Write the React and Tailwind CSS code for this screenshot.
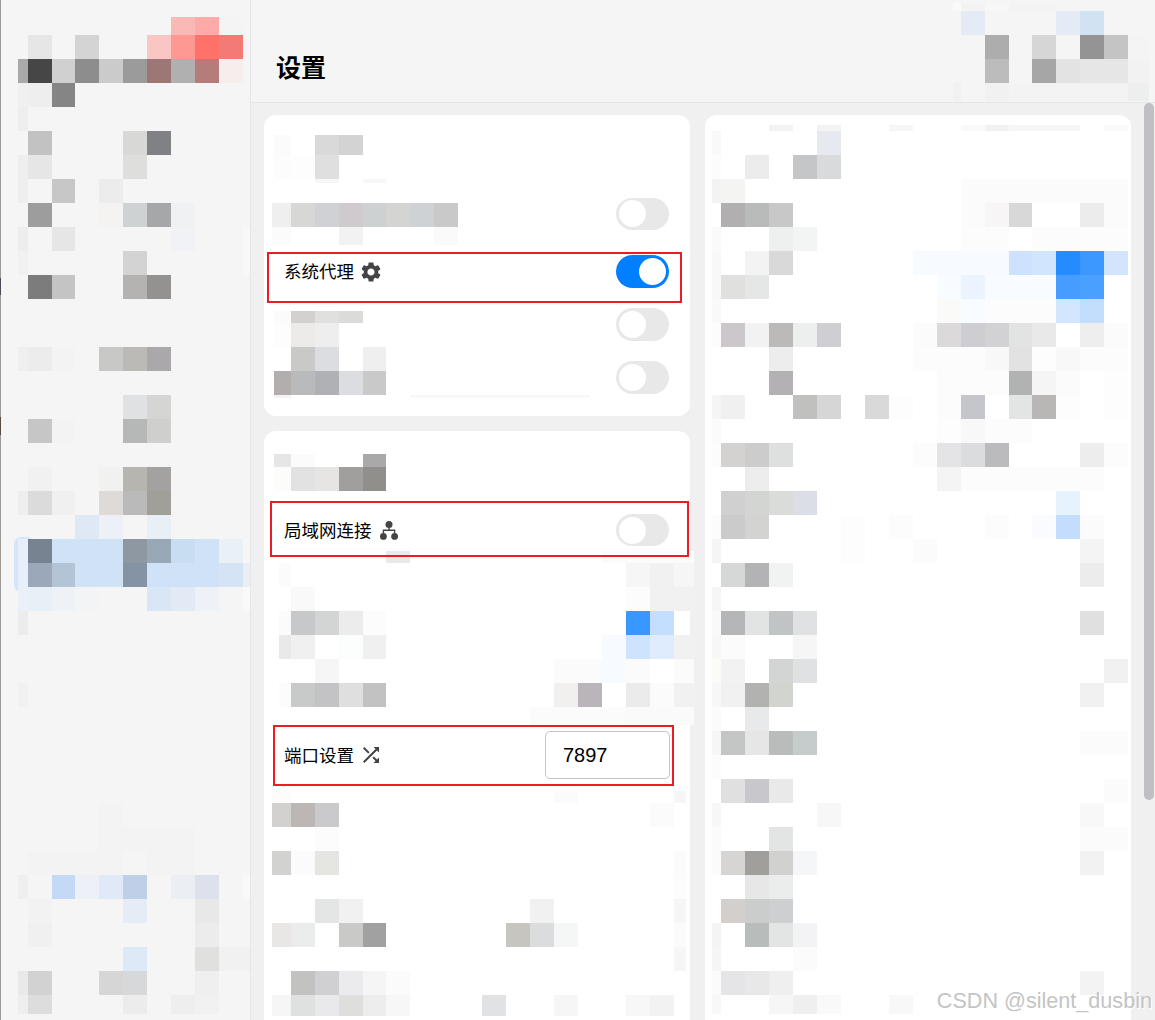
import React from 'react'
import { MdSettings, MdShuffle } from 'react-icons/md'

// Pixelated regions of the screenshot: [row, col, colour, col, colour, ...]
const SIDE_XS = [18, 28, 52, 75, 99, 123, 147, 171, 195, 219, 243, 250]
const SIDE_ROWS = [
    [-1, 7, '#fbb9b6', 8, '#fdaaa8', 9, '#f4f4f4'],
    [0, 1, '#e6e6e6', 3, '#d4d4d4', 6, '#f9c6c4', 7, '#fe9893', 8, '#ff7269', 9, '#f37a75'],
    [1, 0, '#a9a9a9', 1, '#464646', 2, '#d0d0d0', 3, '#8d8d8d', 4, '#cbcbcb', 5, '#9b9b9b', 6, '#9d7775', 7, '#b0b0b0', 8, '#b57c79', 9, '#f6eeec'],
    [2, 0, '#f0f0f0', 1, '#eeeeee', 2, '#858585'],
    [3, 0, '#eeeeee'],
    [4, 1, '#c2c2c2', 5, '#d8d8d6', 6, '#808184'],
    [5, 0, '#eeeeee', 1, '#e6e6e6', 5, '#dededc'],
    [6, 0, '#eeeeee', 2, '#c7c7c7', 4, '#ececec'],
    [7, 1, '#9d9d9d', 4, '#f4f3f1', 5, '#cfd2d3', 6, '#a6a7a8', 7, '#f0f1f3'],
    [8, 0, '#ededed', 2, '#e6e6e6', 7, '#f1f2f5', 10, '#f8f8f8'],
    [9, 0, '#f1f1f1', 5, '#d3d3d3', 10, '#f8f8f8'],
    [10, 1, '#7c7c7c', 2, '#c4c4c4', 5, '#b4b3b1', 6, '#939290'],
    [13, 0, '#efefef', 1, '#ececec', 2, '#f3f3f3', 4, '#c8c8c6', 5, '#bbbab7', 6, '#aaa8aa'],
    [15, 5, '#e0e1e2', 6, '#d5d5d3'],
    [16, 1, '#c6c6c6', 2, '#f3f3f3', 5, '#b6b8b7', 6, '#cfcfcd'],
    [18, 1, '#f1f1f1', 4, '#f1f1ef', 5, '#b7b5b0', 6, '#a3a2a0'],
    [19, 0, '#eeeeee', 1, '#dbdbdb', 2, '#f0f0f0', 4, '#dddad7', 5, '#bababa', 6, '#a09f9a'],
    [20, 3, '#dfe9f5', 4, '#edf1f7', 6, '#e8eff7'],
    [21, 0, '#e9effa', 1, '#778390', 2, '#cfe2f6', 3, '#cfe2f6', 4, '#cfe2f6', 5, '#8e98a3', 6, '#99a8b7', 7, '#c8ddf1', 8, '#cfe2f7', 9, '#e9f0f6', 10, '#f6f6f6'],
    [22, 0, '#e9effa', 1, '#9aa8b9', 2, '#b2c4d6', 3, '#cfe2f6', 4, '#cfe2f6', 5, '#8594a5', 6, '#cfe2f7', 7, '#cfe2f7', 8, '#cfe2f7', 9, '#d5e4f4', 10, '#e9eef5'],
    [23, 0, '#e9f0f9', 1, '#e7eff7', 2, '#eef2f7', 3, '#f2f4f6', 6, '#d9e6f6', 7, '#e2ebf5', 8, '#eef2f6', 10, '#f9f9f9'],
    [24, 0, '#ececec'],
    [27, 0, '#f1f1f1'],
    [32, 4, '#f3f3f3'],
    [33, 4, '#f3f3f3', 5, '#f3f3f3', 6, '#f3f3f3', 7, '#f3f3f3'],
    [34, 1, '#f3f3f3', 2, '#f3f3f3', 3, '#f3f3f3', 4, '#f3f3f3', 6, '#f3f3f3', 7, '#f3f3f3'],
    [35, 0, '#efefef', 2, '#c3d9f5', 3, '#edf1f7', 4, '#dfe9f7', 5, '#bfcfe8', 7, '#ebeff4', 8, '#dde1ec', 10, '#f9f9f9'],
    [36, 1, '#f2f2f2', 5, '#e4edf6', 8, '#e8e8e8'],
    [37, 1, '#f0f0f0', 8, '#ececec'],
    [38, 5, '#dde9f7', 8, '#e0e0de', 9, '#f1f1f1', 10, '#f1f1f1'],
    [39, 0, '#e9e9e9', 1, '#d2d2d2', 4, '#d6d6d6', 5, '#d7d8d9', 8, '#efefef'],
    [40, 0, '#eeeeee', 1, '#dddddd', 5, '#ececec', 7, '#eeeeee', 8, '#f1f1f1'],
]

const HEAD_XS = [953, 961, 985, 1009, 1032, 1056, 1080, 1104, 1128, 1149]
const HEAD_ROWS = [
    [-1, 0, '#fafafa', 1, '#f3f3f3', 2, '#f7f7f7', 3, '#f3f3f3', 4, '#f3f3f3'],
    [0, 1, '#e4ebf6', 5, '#e4ebf6', 6, '#d1e2f3'],
    [1, 2, '#adadad', 4, '#d6d6d6', 6, '#949494', 7, '#c4c4c4', 8, '#f4f4f4'],
    [2, 2, '#bcbcbc', 4, '#a6a6a6', 5, '#e3e3e3', 6, '#e6e6e6', 7, '#e6e6e6', 8, '#f2f2f2'],
    [3, 0, '#f1f1f1', 2, '#f1f1f1', 3, '#f3f3f3', 4, '#f3f3f3', 5, '#f3f3f3', 6, '#f3f3f3', 7, '#f3f3f3', 8, '#edefee'],
]

const RIGHT_XS = [712, 721, 745, 769, 793, 817, 841, 865, 889, 913, 937, 961, 985, 1009, 1032, 1056, 1080, 1104, 1128]
const RIGHT_ROWS = [
    [-1, 3, '#f3f3f3', 5, '#f3f3f3', 8, '#f6f6f6', 11, '#f9f9f9', 12, '#f1f1f1', 13, '#f6f6f6', 14, '#f6f6f6', 15, '#f6f6f6', 17, '#fafafa'],
    [0, 0, '#f9f9f9', 5, '#e6e9f0'],
    [1, 0, '#fcfcfc', 2, '#ececec', 4, '#c5c6c7', 5, '#d9dadb'],
    [2, 0, '#f3f3f3', 1, '#f4f4f2', 11, '#fbfbfb', 12, '#fbfbfb', 13, '#fbfbfb', 14, '#fbfbfb', 15, '#fbfbfb', 16, '#fbfbfb', 17, '#fbfbfb'],
    [3, 1, '#b1afaf', 2, '#b9bbba', 3, '#c8c8c8', 11, '#fbfbfb', 12, '#f7f5f6', 13, '#d8d8d8', 16, '#ececec', 17, '#fbfbfb'],
    [4, 0, '#fafafa', 3, '#eef0ef', 4, '#f3f5f4', 11, '#fcfcfc', 12, '#fcfcfc', 14, '#fcfcfc', 15, '#fcfcfc', 16, '#fcfcfc', 17, '#fcfcfc'],
    [5, 0, '#f8f8f8', 2, '#f3f3f3', 3, '#d9d9d9', 9, '#f7fbff', 10, '#f7fbff', 11, '#f7fbff', 12, '#f7fbff', 13, '#cde2fe', 14, '#d1e6fe', 15, '#248cff', 16, '#3c98fe', 17, '#d2e5fd'],
    [6, 0, '#f8f8f8', 1, '#e0e0de', 2, '#e5e7e6', 10, '#f8fbff', 11, '#ebf4fe', 12, '#f8fbff', 13, '#f8fbff', 14, '#f8fbff', 15, '#469cff', 16, '#4aa0fe'],
    [7, 0, '#f9f9f9', 10, '#fafaf8', 11, '#f8fbff', 12, '#fcfcfc', 13, '#fcfcfc', 14, '#fcfcfc', 15, '#d3e6fe', 16, '#c3defc'],
    [8, 0, '#fcfcfc', 1, '#cbc7ca', 2, '#f2f2f2', 3, '#bcbab8', 4, '#edefee', 5, '#cfced3', 9, '#fbfbfb', 10, '#dbd9da', 11, '#ceced2', 12, '#d2d2d4', 13, '#e2e4e3', 14, '#e9e9e9', 16, '#eeeeee', 17, '#fbfbfb'],
    [9, 3, '#ededed', 9, '#fcfcfc', 10, '#fcfcfc', 11, '#fcfcfc', 12, '#f8f8f8', 13, '#e2e2e2', 14, '#fdfdfd', 15, '#f8f8f8', 16, '#fcfcfc', 17, '#fcfcfc'],
    [10, 3, '#b3b1b4', 10, '#fcfcfc', 11, '#fcfcfc', 12, '#fcfcfc', 13, '#b1b3b2', 14, '#f5f5f5', 15, '#fbfbfb', 17, '#fdfdfd'],
    [11, 0, '#f5f5f5', 1, '#f0f0f0', 4, '#c0c0be', 5, '#d6d6d6', 7, '#d9d9d9', 8, '#fdfdfd', 10, '#fcfcfc', 11, '#c5c6cb', 13, '#e3e5e4', 14, '#b8b7b5', 15, '#fdfdfd', 17, '#fdfdfd'],
    [12, 0, '#fbfbfb', 10, '#fdfdfd', 11, '#f8f8f8', 12, '#fcfcfc', 13, '#fcfcfc'],
    [13, 0, '#fcfcfc', 1, '#d3d2d0', 2, '#cccccc', 3, '#dee0df', 9, '#fcfcfc', 10, '#e4e4e6', 11, '#dbdcde', 12, '#bbbabc', 16, '#ededed', 17, '#fcfcfc'],
    [14, 2, '#ededed', 10, '#f4f4f4', 11, '#fcfcfc', 12, '#fcfcfc', 13, '#fcfcfc', 14, '#fcfcfc', 15, '#fcfcfc', 16, '#fcfcfc'],
    [15, 1, '#d0d0d0', 2, '#d3d5d2', 3, '#dadcd9', 4, '#dbdee7', 15, '#e6f2fe'],
    [16, 0, '#fcfcfc', 1, '#cbcbcb', 2, '#d3d3d1', 6, '#fdfdfd', 8, '#fcfcfc', 12, '#fcfcfc', 14, '#fafbff', 15, '#c4dcfe', 16, '#fbfbfb'],
    [17, 0, '#f5f5f5', 6, '#fdfdfd', 9, '#fbfbfb', 16, '#f4f4f4'],
    [18, 1, '#d6d8d7', 2, '#b3b3b5', 3, '#f1f3f2', 16, '#ececec'],
    [19, 0, '#f6f6f6'],
    [20, 0, '#f9f9f9', 1, '#b5b6b8', 2, '#e2e4e3', 3, '#c0c4c5', 4, '#e0e1e3', 16, '#e0e0e0'],
    [21, 0, '#f7f7f7', 1, '#fbfbfb', 4, '#f6f6f6'],
    [22, 0, '#fdfbf8', 1, '#f2f2f2', 3, '#d3d5d4', 4, '#e0e1e3', 17, '#f1f1f1'],
    [23, 0, '#f7f7f7', 1, '#f1f1f1', 2, '#b2b3b1', 3, '#d2d4cf', 16, '#f1f1f1'],
    [24, 0, '#fbfbfb', 2, '#e8e9eb'],
    [25, 0, '#f6f6f6', 1, '#c3c6c5', 2, '#e6e6e6', 3, '#babcbb', 4, '#c6cccb', 16, '#fbfbfb', 17, '#fbfbfb'],
    [26, 0, '#fcfcfc'],
    [27, 1, '#e0e0e0', 2, '#c8c7cc', 3, '#e9e9e9', 17, '#fbfbfb'],
    [28, 0, '#f7f7f7', 5, '#f7f7f7', 16, '#f8f8f8'],
    [29, 0, '#fbfbfb', 3, '#e3e5e4', 16, '#fbfbfb', 17, '#fbfbfb'],
    [30, 0, '#fbfbfb', 1, '#d6d5d3', 2, '#a09f9b', 3, '#d1d1cf', 4, '#f5f6f8', 16, '#f2f2f2'],
    [31, 2, '#e7e7e7', 3, '#ebeded'],
    [32, 1, '#d3cfcc', 2, '#cbcccc', 3, '#cdcfd1'],
    [33, 0, '#f4f4f4', 2, '#b8bdbb', 3, '#e3e4e4', 4, '#f3f3f5'],
    [34, 0, '#f5f5f5', 4, '#fbfbfb'],
    [35, 0, '#fbfbfb', 1, '#e5e5e7', 2, '#e8e8e8', 3, '#efefef', 16, '#f3f3f3'],
    [36, 0, '#f8f8f8', 3, '#f6f6f6', 4, '#efefef', 5, '#f9f9f9', 8, '#f8f8f8'],
]

// Middle column has uneven bands: [top, bottom, x1, x2, colour, x1, x2, colour, ...]
const MID_BANDS = [
    [135, 155, 274, 291, '#fbfbfb', 315, 339, '#d9d9d9', 339, 363, '#d3d3d3'],
    [155, 179, 274, 291, '#fcfcfc', 291, 315, '#fdfdfd', 315, 339, '#e0dfe0'],
    [179, 183, 315, 339, '#f7f7f7', 363, 386, '#f7f7f7'],
    [203, 227, 272, 291, '#efefef', 291, 315, '#d7d7d5', 315, 339, '#cfd1d4', 339, 363, '#cfcacd', 363, 386, '#cdd1d2', 386, 410, '#d4d4d2', 410, 434, '#ced2d5', 434, 458, '#c9c9c9'],
    [227, 245, 272, 291, '#fbfbfb', 339, 363, '#f3f2f3', 434, 458, '#fafafa'],
    [311, 323, 274, 291, '#fbfbfb', 291, 315, '#d2d1d0', 315, 339, '#e0e0de', 339, 363, '#dbdbd9'],
    [323, 347, 274, 291, '#fdfdfd', 291, 315, '#ecebe9', 315, 339, '#eeeeee'],
    [347, 371, 291, 315, '#c9c9c7', 315, 339, '#dcdde0', 363, 386, '#efefef'],
    [371, 395, 274, 291, '#b3aeae', 291, 315, '#b9babc', 315, 339, '#b0b1b5', 339, 363, '#dcdde1', 363, 386, '#c9c9c9'],
    [395, 398, 274, 291, '#f4f4f4', 410, 590, '#f8f8f8'],
    [454, 467, 274, 291, '#e6e6e6', 291, 315, '#fbfbfb', 363, 386, '#a9a9a9'],
    [467, 491, 274, 291, '#fcfcfa', 291, 315, '#e2e2e2', 315, 339, '#e6e5e3', 339, 363, '#a09f9d', 363, 386, '#918f8c'],
    [551, 563, 386, 410, '#e9e9e9', 602, 694, '#fbfbfb'],
    [563, 587, 279, 291, '#fbfbfb', 626, 650, '#f6f6f6', 650, 674, '#f1f1f1', 674, 694, '#f6f6f6'],
    [587, 611, 291, 315, '#f9f9f9', 626, 650, '#fcfcfc', 650, 694, '#f1f1f1'],
    [611, 635, 279, 291, '#fbfbfb', 291, 315, '#c7c8ca', 315, 339, '#d3d5d4', 339, 363, '#ececec', 363, 386, '#fcfcfc', 626, 650, '#3898ff', 650, 674, '#c3defe'],
    [635, 659, 279, 291, '#ebe9e7', 291, 315, '#f0f0f0', 339, 363, '#fcfefd', 363, 386, '#f0f0f0', 602, 626, '#f7fbff', 626, 650, '#cde3fe', 650, 674, '#deecfe', 674, 694, '#f1f1f1'],
    [659, 683, 315, 339, '#f6f6f6', 554, 602, '#fbfbfb', 602, 626, '#f7fbff', 626, 650, '#fbfbfb', 674, 694, '#fbfbfb'],
    [683, 707, 279, 291, '#fcfcfc', 291, 315, '#c8cac9', 315, 339, '#c3c3c5', 339, 363, '#dfdfdf', 363, 386, '#c2c2c2', 554, 578, '#f1f0ee', 578, 602, '#bab5ba', 626, 650, '#ebebeb', 650, 674, '#fbfbfb', 674, 694, '#f1f1f1'],
    [707, 725, 530, 626, '#fbfbfb', 626, 694, '#fafafa'],
    [791, 803, 272, 291, '#fdfcfa', 554, 578, '#fbfbfb', 674, 686, '#f6f6f6'],
    [803, 827, 272, 291, '#d2d1cf', 291, 315, '#bcb7b4', 315, 339, '#cacacc', 650, 674, '#fbfbfb'],
    [827, 851, 315, 339, '#fcfcfc'],
    [851, 875, 272, 291, '#d2d2d0', 291, 315, '#fbfbfb', 315, 339, '#e5e6e1', 674, 686, '#fbfbfb'],
    [875, 899, 674, 686, '#fcfcfc'],
    [899, 923, 315, 339, '#e4e6e5', 339, 363, '#f1f1f1', 530, 554, '#f1f1f1', 674, 686, '#f6f6f6'],
    [923, 947, 272, 291, '#e9e7e6', 291, 315, '#ebedec', 339, 363, '#c9c9c7', 363, 386, '#a1a1a1', 506, 530, '#c6c5c0', 530, 554, '#dbdcde', 554, 578, '#f5f7f6', 674, 686, '#fbfbfb'],
    [947, 971, 674, 686, '#f6f6f6'],
    [971, 995, 291, 315, '#c2c2c0', 315, 339, '#d0d0d2', 339, 363, '#ebebed', 363, 386, '#f5f5f5', 386, 410, '#fbfbfb'],
    [995, 1016, 272, 291, '#f6f6f6', 291, 315, '#dfe1e0', 315, 339, '#e9e9eb', 339, 363, '#dededc', 363, 386, '#ecedec', 386, 410, '#f7f7f7', 482, 506, '#e1e2e4', 554, 578, '#f6f6f6', 626, 650, '#f7f7f7', 650, 674, '#f2f2f2'],
]

function gridRects(xs, y0, top, bottom, rows) {
    const rects = []
    rows.forEach(([row, ...cells]) => {
        const y1 = Math.max(top, y0 + row * 24)
        const y2 = Math.min(bottom, y0 + (row + 1) * 24)
        for (let i = 0; i < cells.length; i += 2) {
            const col = cells[i]
            rects.push({ x: xs[col], y: y1, w: xs[col + 1] - xs[col], h: y2 - y1, fill: cells[i + 1] })
        }
    })
    return rects
}

function bandRects(bands) {
    const rects = []
    bands.forEach(([top, bottom, ...cells]) => {
        for (let i = 0; i < cells.length; i += 3) {
            rects.push({ x: cells[i], y: top, w: cells[i + 1] - cells[i], h: bottom - top, fill: cells[i + 2] })
        }
    })
    return rects
}

const MOSAIC = [
    ...gridRects(SIDE_XS, 35, 17, 1014, SIDE_ROWS),
    ...gridRects(HEAD_XS, 11, 3, 101, HEAD_ROWS),
    ...gridRects(RIGHT_XS, 131, 125, 1014, RIGHT_ROWS),
    ...bandRects(MID_BANDS),
]

function Mosaic() {
    return (
        <svg className="absolute inset-0 z-10 pointer-events-none" width="1155" height="1020" viewBox="0 0 1155 1020" shapeRendering="crispEdges">
            <rect x="14" y="537" width="20" height="55" rx="7" fill="#d4e6f9" shapeRendering="auto" />
            {MOSAIC.map((r, i) => (
                <rect key={i} x={r.x} y={r.y} width={r.w} height={r.h} fill={r.fill} />
            ))}
            <rect x="0" y="278" width="1" height="17" fill="#4a4a55" />
            <rect x="0" y="417" width="1" height="18" fill="#5a4a40" />
        </svg>
    )
}

function Toggle({ on, tall }) {
    if (on) {
        return (
            <div className="flex items-center justify-end w-[53px] h-[33px] pr-[3px] mr-px rounded-full bg-[#007fff]">
                <div className="w-[27px] h-[27px] rounded-full bg-white" />
            </div>
        )
    }
    return (
        <div className={`flex items-center w-[53px] pl-[3px] mr-px rounded-full bg-[#e8e8e8] ${tall ? 'h-[33px]' : 'h-[32px]'}`}>
            <div className="w-[27px] h-[27px] rounded-full bg-white" />
        </div>
    )
}

function LanIcon() {
    return (
        <svg width="18" height="19" viewBox="0 0 18 19" fill="#444">
            <circle cx="9" cy="3.6" r="3.5" />
            <circle cx="3.4" cy="15.4" r="3.4" />
            <circle cx="14.6" cy="15.4" r="3.4" />
            <path d="M8.3 6h1.4v2.6h5.6V12h-1.4V10H4.1v2H2.7V8.6h5.6z" />
        </svg>
    )
}

function Row({ label, icon, heightClass, boxClass, children }) {
    return (
        <div className={`relative flex items-center justify-between pl-[20px] pr-[20px] ${heightClass}`}>
            <div className="flex items-center gap-[8px] text-[17.5px] text-black">
                <span>{label}</span>
                {icon}
            </div>
            {children}
            {boxClass && <div className={`absolute z-20 border-2 border-[#ed1c24] ${boxClass}`} />}
        </div>
    )
}

function Sidebar() {
    return <aside className="w-[251px] shrink-0 bg-[#f5f5f5] border-l border-l-[#9a9a9a] border-r border-r-[#e6e6e6]" />
}

function App() {
    return (
        <div className="relative flex w-[1155px] h-[1020px] overflow-hidden bg-[#f0f0f0] font-['Noto_Sans_CJK_SC','Liberation_Sans',sans-serif]">
            <Sidebar />

            <main className="flex flex-col flex-1 min-w-0">
                <header className="flex items-center shrink-0 h-[103px] pt-[31px] pl-[25px] bg-[#f5f5f5] border-b border-[#e5e5e5]">
                    <h1 className="text-[25px] font-bold text-black">设置</h1>
                </header>

                <div className="flex flex-1 min-h-0 overflow-hidden pl-[13px] pt-[12px]">
                    {/* Left column */}
                    <div className="flex flex-col gap-[15px] w-[426px] shrink-0">
                        <section className="h-[301px] shrink-0 pt-[72px] rounded-[12px] bg-white">
                            <Row label="" heightClass="h-[53px]">
                                <Toggle />
                            </Row>
                            <Row
                                label="系统代理"
                                icon={<MdSettings className="-ml-[3px] text-[#444]" size={24} />}
                                heightClass="h-[53px] mt-[5px]"
                                boxClass="left-[3px] right-[8px] top-[7px] -bottom-[5px]"
                            >
                                <Toggle on />
                            </Row>
                            <Row label="" heightClass="h-[53px]">
                                <Toggle tall />
                            </Row>
                            <Row label="" heightClass="h-[53px]">
                                <Toggle tall />
                            </Row>
                        </section>

                        <section className="h-[700px] shrink-0 pt-[73px] rounded-[12px] bg-white">
                            <Row
                                label="局域网连接"
                                icon={<LanIcon />}
                                heightClass="h-[52px]"
                                boxClass="left-[6px] right-[1px] -top-[3px] -bottom-px"
                            >
                                <Toggle />
                            </Row>
                            <Row
                                label="端口设置"
                                icon={<MdShuffle className="-ml-[3px] text-[#444]" size={24} />}
                                heightClass="h-[52px] mt-[173px]"
                                boxClass="left-[9px] right-[16px] -top-[4px] -bottom-[5px]"
                            >
                                <div className="flex items-center w-[125px] h-[48px] pl-[17px] rounded-[5px] border border-[#c4c4c4] bg-white font-['Liberation_Sans',sans-serif] text-[20px] text-black">
                                    7897
                                </div>
                            </Row>
                        </section>
                    </div>

                    {/* Right column */}
                    <section className="w-[426px] h-[1000px] shrink-0 ml-[15px] rounded-[12px] bg-white" />

                    {/* Scrollbar thumb */}
                    <div className="w-[10px] h-[697px] shrink-0 -mt-[12px] ml-[13px] rounded-[5px] bg-[#bfc0c3]" />
                </div>
            </main>

            <Mosaic />

            <div className="absolute z-30 right-[3px] bottom-[6px] font-['Liberation_Sans',sans-serif] text-[21.6px] leading-[26px] text-[#c4c4c4] [text-shadow:1px_1px_1px_#ffffff]">
                CSDN @silent_dusbin
            </div>
        </div>
    )
}

export default App
